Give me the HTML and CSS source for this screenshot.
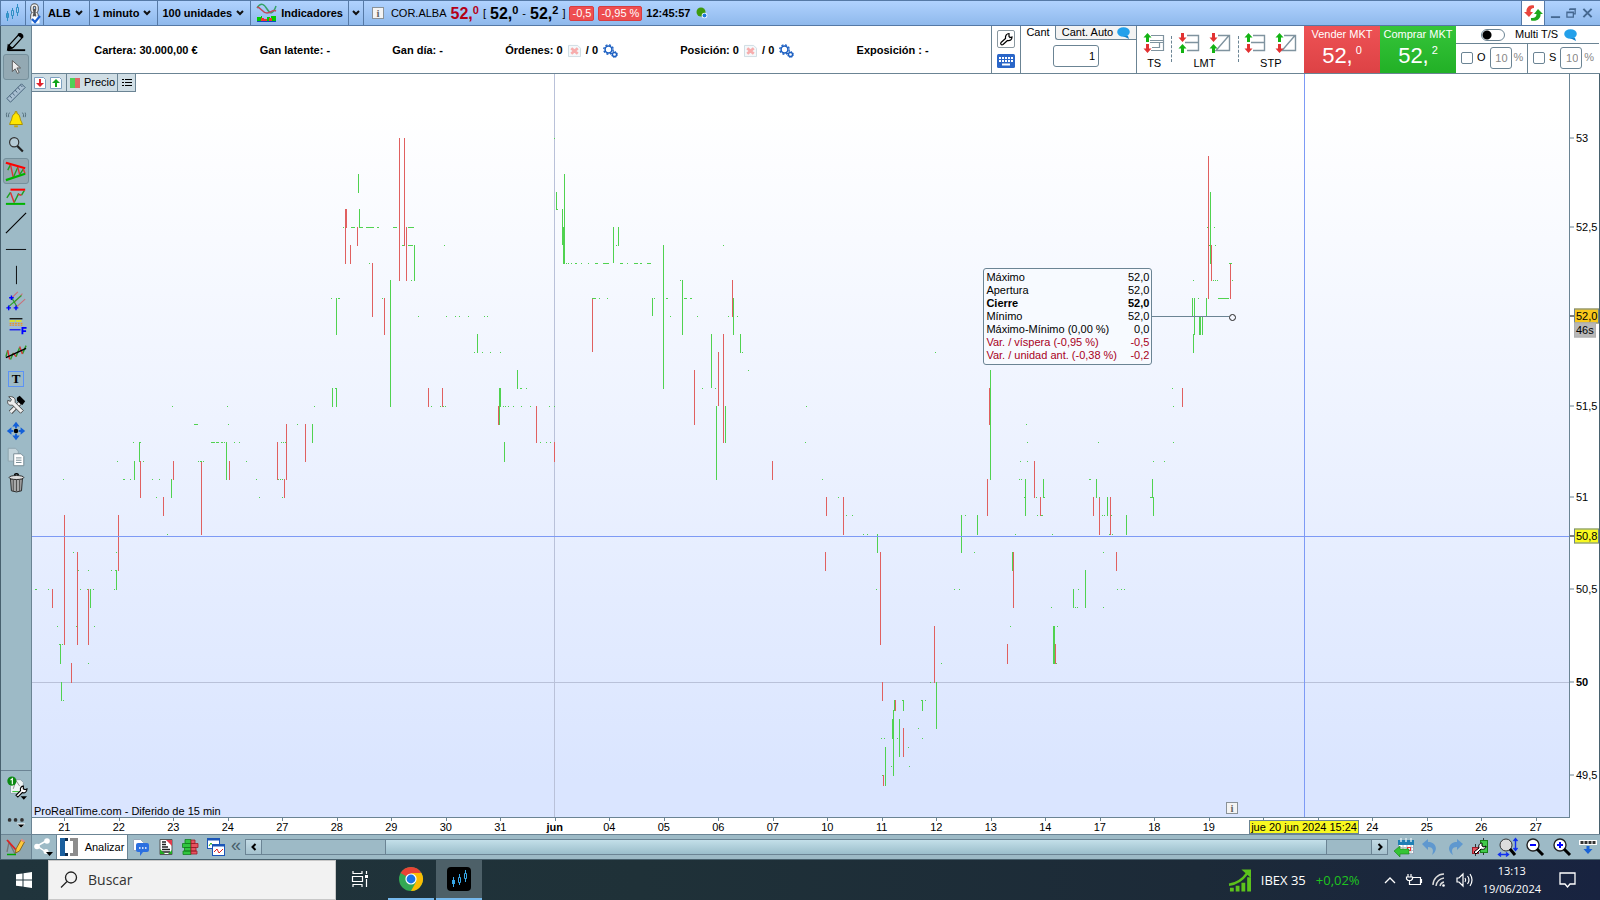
FILE: index.html
```html
<!DOCTYPE html>
<html lang="es">
<head>
<meta charset="utf-8">
<title>ALB - 1 minuto</title>
<link rel="stylesheet" href="styles.css">
</head>
<body>
<header class="titlebar">
  <span class="cell cell-logo"><svg width="16" height="18" viewBox="0 0 16 18"><g fill="none" stroke="#2f8fc4"><path d="M2.500 7v2M2.500 14v3M7.500 4v2M7.500 12v3M12.500 0v3M12.500 9v3"/><path fill="#3d9ccf" d="M1.500 9.500h2v4h-2z"/><path d="M6.500 6.500h2v5h-2zM11.500 3.500h2v5h-2z"/></g></svg></span>
  <button class="cell cell-link" aria-label="Vincular"><svg width="14" height="21" viewBox="0 0 14 21"><g fill="none" stroke="#555" stroke-width="3.600"><rect x="4" y="2" width="5" height="7" rx="2.500"/><rect x="4" y="10" width="5" height="7" rx="2.500"/></g><g fill="none" stroke="#eee" stroke-width="1.600"><rect x="4" y="2" width="5" height="7" rx="2.500"/><rect x="4" y="10" width="5" height="7" rx="2.500"/></g><path d="M6.500 6v7" stroke="#555" stroke-width="2.500"/><path d="M3.500 13.500h8v7h-8z" fill="#fff"/><path d="M4 16l3 3 5-6" fill="none" stroke="#1a5fd0" stroke-width="2.200"/></svg></button>
  <button class="cell">ALB<svg class="chev" viewBox="0 0 8 6"><path d="M1 1l3 3 3-3"/></svg></button>
  <button class="cell">1 minuto<svg class="chev" viewBox="0 0 8 6"><path d="M1 1l3 3 3-3"/></svg></button>
  <button class="cell">100 unidades<svg class="chev" viewBox="0 0 8 6"><path d="M1 1l3 3 3-3"/></svg></button>
  <button class="cell cell-ind"><svg width="20" height="20" viewBox="0 0 20 20"><path d="M0 5C4-1 7 1 10 6s6 6 9-3" fill="none" stroke="#35a368" stroke-width="1.500"/><path d="M0 4c4 0 5 6 10 6s5-4 9-2" fill="none" stroke="#c0485a" stroke-width="1.500"/><path d="M0 14h4v-1h1v5H0zM10 14h3v4h-3zM14 13h5v5h-5z" fill="#0c0"/><path d="M4 15h3v3H4zM7 16h3v2H7zM12 15h3v3h-3z" fill="#e33"/><path d="M0 18.500h19" stroke="#1246c8"/></svg>Indicadores</button>
  <button class="cell cell-more" aria-label="Más indicadores"><svg class="chev" viewBox="0 0 8 6"><path d="M1 1l3 3 3-3"/></svg></button>
  <div class="quote">
    <span class="info">i</span>
    <span class="name">COR.ALBA</span>
    <span class="price last">52,<sup>0</sup></span>
    <span>[</span><span class="price">52,<sup>0</sup></span><span>-</span><span class="price">52,<sup>2</sup></span><span>]</span>
    <span class="tag">-0,5</span><span class="tag">-0,95 %</span>
    <b class="clock">12:45:57</b>
    <svg width="12" height="12" viewBox="0 0 12 12"><circle cx="5" cy="5" r="4.500" fill="#3f9a0c"/><circle cx="8.500" cy="8.500" r="2.800" fill="#fff"/><circle cx="8.500" cy="8.500" r="2" fill="#1a78d8"/></svg>
  </div>
  <button class="cell cell-sync" aria-label="Sincronizar"><svg width="19" height="18" viewBox="0 0 19 18"><path d="M10 1.500C5 0 2 4 2.500 8H0l5 5 4-5H6.500c0-3 1-4 3.500-4z" fill="#e8443c"/><path d="M7 16.500c6 1.500 10-2 9.500-6.500H19l-5-5-4 5h2.500c0 3-2 4.500-5.500 4z" fill="#1fa81f"/></svg></button>
  <button class="win" aria-label="Minimizar"><svg width="11" height="12" viewBox="0 0 12 12"><path d="M1 10.500h10" stroke="#456891" stroke-width="2"/></svg></button>
  <button class="win" aria-label="Restaurar"><svg width="11" height="12" viewBox="0 0 12 12"><path d="M4 3V2h6v5H8M4 1.500h7M1 5h7v5.500H1zM1 5.500h7" fill="none" stroke="#456891" stroke-width="1.400"/></svg></button>
  <button class="win" aria-label="Cerrar"><svg width="11" height="12" viewBox="0 0 12 12"><path d="M1.500 1.500l9 9M10.500 1.500l-9 9" stroke="#456891" stroke-width="2.200"/></svg></button>
</header>

<div class="workspace">
  <nav class="tools" aria-label="Dibujo">
    <button aria-label="Dibujar"><svg viewBox="0 0 24 24"><path d="M3 22h19" stroke="#000" stroke-width="2"/><path d="M5 16L15 5l4 3L9 19l-5 1z" fill="#9dbac6" stroke="#000" stroke-width="1.400"/><path d="M14 4c2-2 7 0 6 4l-2 1-4-3zM3 15l6 5-7 3z"/></svg></button>
    <button class="on" aria-label="Puntero"><svg viewBox="0 0 24 24"><path d="M8 5v12l3-3 2.500 5 2-1-2.500-5h4z" fill="#eee" stroke="#555"/></svg></button>
    <button aria-label="Regla"><svg viewBox="0 0 24 24"><path d="M2 18L18 2l4 4L6 22z" fill="#a9c0d2" stroke="#3d5a72"/><path d="M5 15l2.500 2.500M8 12l2.500 2.500M11 9l2.500 2.500M14 6l2.500 2.500M17 3.500l2 2" stroke="#3d5a72"/></svg></button>
    <button aria-label="Alerta"><svg viewBox="0 0 24 24"><path d="M11 4h2v2c4 1 3 7 5 9l1 3H5l1-3c2-2 1-8 5-9z" fill="#ffe600" stroke="#a58b00"/><path d="M10 19h4v2h-4z" fill="#c8a800"/><path d="M5 5q-2 2-1 5M2 5q-1 2 0 5M19 5q2 2 1 5M22 5q1 2 0 5" fill="none" stroke="#4f6a77"/></svg></button>
    <button aria-label="Lupa"><svg viewBox="0 0 24 24"><circle cx="10" cy="9" r="5" fill="#b5cbd6" stroke="#333" stroke-width="1.300"/><path d="M13.500 13l6 6" stroke="#222" stroke-width="2.400"/></svg></button>
    <button class="on" aria-label="Figuras"><svg viewBox="0 0 24 24"><path d="M3 11L6 5M9 19l5-11M16 16l4-6" stroke="#1fa01f" stroke-width="1.500"/><path d="M6 5l3 14M14 8l2 8M20 10l2 5" fill="none" stroke="#d33" stroke-width="1.500"/><path d="M1 3l21 6" stroke="#f00" stroke-width="2.500"/><path d="M1 22l21-7" stroke="#00b400" stroke-width="2.500"/></svg></button>
    <button aria-label="Soportes"><svg viewBox="0 0 24 24"><path d="M2 13l4-6M10 18l5-10M18 10l3-5" fill="none" stroke="#1fa01f" stroke-width="1.600"/><path d="M6 7l4 11M14 9l4 1" stroke="#d33" stroke-width="1.600"/><path d="M6 4h16" stroke="#f00" stroke-width="2.200"/><path d="M1 19.500h21" stroke="#00b400" stroke-width="2.200"/></svg></button>
    <button aria-label="Línea"><svg viewBox="0 0 24 24"><path d="M1 23L23 1" stroke="#000" stroke-width="1.200"/></svg></button>
    <button aria-label="Horizontal"><svg viewBox="0 0 24 24"><path d="M1 12.500h22" stroke="#000"/></svg></button>
    <button aria-label="Vertical"><svg viewBox="0 0 24 24"><path d="M12.500 2v20" stroke="#000"/></svg></button>
    <button aria-label="Horquilla"><svg viewBox="0 0 24 24"><path d="M7 9L14 2M12 19l10-9M10 14l9-10" stroke="#c9707a" stroke-width="1.200"/><path d="M3 19L18 6M7 8l6 10" stroke="#2ca02c" stroke-width="1.300"/><path d="M7 6v5M4.500 8.500h5M4 17v5M1.500 19.500h5M12 17v5M9.500 19.500h5" stroke="#00f" stroke-width="1.500"/></svg></button>
    <button aria-label="Fibonacci"><svg viewBox="0 0 24 24"><path d="M5 3h14" stroke="#000" stroke-width="1.300"/><path d="M5 5.500h14" stroke="#ee0" stroke-width="1.500" stroke-dasharray="6 1"/><path d="M5 8h14M5 10h14" stroke="#f80" stroke-dasharray="2 1"/><path d="M5 12h11" stroke="#9bb8ff"/><path d="M5 15h12" stroke="#22e" stroke-width="1.500"/><path d="M19 20v-7h4.500M19 16.500h4" fill="none" stroke="#00f" stroke-width="2"/></svg></button>
    <button aria-label="Regresión"><svg viewBox="0 0 24 24"><path d="M1 16l2-7M6 19l3-7M12 16l4-10M19 13l4-9" fill="none" stroke="#2a9a2a" stroke-width="1.600"/><path d="M3 9l2 10M9 12l3 4M16 5l3 8" stroke="#d33" stroke-width="1.500"/><path d="M1 17l22-10" stroke="#000" stroke-width="1.500"/></svg></button>
    <button class="txt" aria-label="Texto"><span>T</span></button>
    <button aria-label="Herramientas"><svg viewBox="0 0 24 24"><path d="M17 9L6 20" stroke="#444" stroke-width="5"/><path d="M17 9L6 20" stroke="#eee" stroke-width="3"/><path d="M13 4l3-2 6 6-3 4-3-2-3-3z"/><path d="M4 3l3 3-1 2-3-1c-1 4 2 6 5 5l9 9 3-3-9-9c1-4-2-7-7-6z" fill="#eee" stroke="#444"/></svg></button>
    <button aria-label="Mover"><svg viewBox="0 0 24 24"><circle cx="12" cy="12" r="2.500"/><path d="M12 2l4 5h-3v2h-2V7H8zM12 22l4-5h-3v-2h-2v2H8zM2 12l5-4v3h2v2H7v3zM22 12l-5-4v3h-2v2h2v3z" fill="#1460d8"/></svg></button>
    <button aria-label="Copiar"><svg viewBox="0 0 24 24"><path d="M3.500 2.500h8l3 3v11h-11z" fill="#c3d4db" stroke="#8ca3ad"/><path d="M9.500 8.500h8l3 3v10h-11z" fill="#fff" stroke="#71858f"/><path d="M12 13h6M12 15.500h6M12 18h6" stroke="#71858f"/></svg></button>
    <button aria-label="Eliminar"><svg viewBox="0 0 24 24"><path d="M6 7.500h13l-1 13q-5.500 2.500-11 0z" fill="#aaa" stroke="#222"/><path d="M9 8v13M12.500 8v13M16 8v13" stroke="#444"/><ellipse cx="12.500" cy="6" rx="8" ry="2.200" fill="#ddd" stroke="#222"/><path d="M10 3q2.500-2 5 0" fill="none" stroke="#000" stroke-width="1.500"/></svg></button>
    <div class="tools-end">
      <button aria-label="Configurar"><svg viewBox="0 0 24 28"><path d="M6 6h11l3 3v12H6z" fill="#eef3f4" stroke="#8ca3ad"/><path d="M9 16l3-9 4 6" fill="none" stroke="#888"/><path d="M8 19h7" stroke="#2b2"/><path d="M12 23l5-5c-1-3 1-5 3-5v3l2 1 2-1c0 4-3 5-5 4l-5 5z" fill="#fff" stroke="#000" stroke-width="1.200"/><circle cx="7.500" cy="7.500" r="5" fill="#0b8a12"/><path d="M6 6.500L8 5v6" fill="none" stroke="#fff" stroke-width="1.300"/><path d="M17 24h7l-3.500 4z"/></svg></button>
      <button aria-label="Más"><svg viewBox="0 0 24 28"><circle cx="5" cy="15" r="2" fill="#333"/><circle cx="11.500" cy="15" r="2" fill="#333"/><circle cx="18.500" cy="15" r="2" fill="#333"/><path d="M13 19h9l-4.500 5z" fill="#fff"/><path d="M14 20h7l-3.500 3.500z"/></svg></button>
    </div>
  </nav>

  <main class="main">
    <section class="account">
      <div class="stats">
        <span>Cartera: 30.000,00 €</span>
        <span>Gan latente: -</span>
        <span>Gan día: -</span>
        <span class="st">Órdenes: 0 <svg class="del" viewBox="0 0 14 13"><path d="M.5.500h10l3 3v9H.5z" fill="#f4f8fa" stroke="#cddbe2"/><path d="M3.500 3.500l7 6M10.500 3.500l-7 6" stroke="#f7adad" stroke-width="3"/></svg> / 0 <svg class="gear" viewBox="0 0 15 14"><circle cx="5.500" cy="5.500" r="3.400" fill="none" stroke="#1b5fc2" stroke-width="1.500"/><circle cx="5.500" cy="5.500" r="4.700" fill="none" stroke="#1b5fc2" stroke-width="1.400" stroke-dasharray="2 1.690"/><circle cx="11.500" cy="10.500" r="2" fill="none" stroke="#1b5fc2" stroke-width="1.300"/><circle cx="11.500" cy="10.500" r="3" fill="none" stroke="#1b5fc2" stroke-dasharray="1.300 1.050"/></svg></span>
        <span class="st">Posición: 0 <svg class="del" viewBox="0 0 14 13"><path d="M.5.500h10l3 3v9H.5z" fill="#f4f8fa" stroke="#cddbe2"/><path d="M3.500 3.500l7 6M10.500 3.500l-7 6" stroke="#f7adad" stroke-width="3"/></svg> / 0 <svg class="gear" viewBox="0 0 15 14"><circle cx="5.500" cy="5.500" r="3.400" fill="none" stroke="#1b5fc2" stroke-width="1.500"/><circle cx="5.500" cy="5.500" r="4.700" fill="none" stroke="#1b5fc2" stroke-width="1.400" stroke-dasharray="2 1.690"/><circle cx="11.500" cy="10.500" r="2" fill="none" stroke="#1b5fc2" stroke-width="1.300"/><circle cx="11.500" cy="10.500" r="3" fill="none" stroke="#1b5fc2" stroke-dasharray="1.300 1.050"/></svg></span>
        <span>Exposición : -</span>
      </div>
      <div class="quick">
        <button class="wrench" aria-label="Ajustes"><svg width="14" height="14" viewBox="0 0 14 14"><path d="M2 10.500L6.500 6.500C6 3.500 8 1.500 10 1.500v3L11 5.500l2-.5c0 3-2 4-4.500 3.500L4 12.500c-1.500 1-3-.5-2-2z" fill="#fff" stroke="#000" stroke-width="1.200"/></svg></button>
        <button class="kbd" aria-label="Teclado"><svg width="18" height="14" viewBox="0 0 18 14"><rect width="18" height="14" rx="1.500" fill="#2a66c8"/><path d="M2 4h14M2 7h14" stroke="#fff" stroke-width="2" stroke-dasharray="2 1"/><path d="M5 10.500h8" stroke="#fff" stroke-width="2"/></svg></button>
      </div>
      <div class="qty">
        <div class="tabs"><button class="tab sel">Cant</button><button class="tab">Cant. Auto <svg class="bubble" viewBox="0 0 13 12"><ellipse cx="6.500" cy="5" rx="6.300" ry="4.800" fill="#23a0ea"/><path d="M6 9h5l1 3z" fill="#1583cc"/></svg></button></div>
        <input type="text" value="1" aria-label="Cantidad">
      </div>
      <div class="orders">
        <div class="grp">
          <div class="ic"><svg viewBox="0 0 20 20"><path d="M7 2.500h12.500v15H7" fill="none" stroke="#7f939f" stroke-width="1.200"/><path d="M6 7.500h13M6 9.500h13M15.500 10v4.500H8" fill="none" stroke="#7f939f" stroke-width="1.200"/><path d="M3.500 0l4 4.500H5V9H2V4.500H-.5z" fill="#13b313"/><path d="M3.500 20l4-4.500H5V11H2v4.500H-.5z" fill="#e23232"/></svg></div>TS</div>
        <div class="grp">
          <div class="ic"><svg viewBox="0 0 20 20"><path d="M8 2.500h11.500v15H8M6 9.500h13" fill="none" stroke="#7f939f" stroke-width="1.400"/><path d="M3.500 9l4-4.500H5V0H2v4.500H-.5z" fill="#e23232"/><path d="M3.500 11l4 4.500H5V20H2v-4.500H-.5z" fill="#13b313"/></svg><svg viewBox="0 0 20 20"><path d="M8 2.500h11.500v15H6L19 2.500" fill="none" stroke="#7f939f" stroke-width="1.400"/><path d="M3.500 9l4-4.500H5V0H2v4.500H-.5z" fill="#e23232"/><path d="M3.500 11l4 4.500H5V20H2v-4.500H-.5z" fill="#13b313"/></svg></div>LMT</div>
        <div class="grp">
          <div class="ic"><svg viewBox="0 0 20 20"><path d="M8 2.500h11.500v15H8M6 9.500h13" fill="none" stroke="#7f939f" stroke-width="1.400"/><path d="M3.500 0l4 4.500H5V9H2V4.500H-.5z" fill="#13b313"/><path d="M3.500 20l4-4.500H5V11H2v4.500H-.5z" fill="#e23232"/></svg><svg viewBox="0 0 20 20"><path d="M8 2.500h11.500v15H6L19 2.500" fill="none" stroke="#7f939f" stroke-width="1.400"/><path d="M3.500 0l4 4.500H5V9H2V4.500H-.5z" fill="#13b313"/><path d="M3.500 20l4-4.500H5V11H2v4.500H-.5z" fill="#e23232"/></svg></div>STP</div>
      </div>
      <button class="mkt sell">Vender MKT<span class="big">52,<small>0</small></span></button>
      <button class="mkt buy">Comprar MKT<span class="big">52,<small>2</small></span></button>
      <div class="multi">
        <label class="multi-top"><input type="checkbox" class="switch">Multi T/S <svg class="bubble" viewBox="0 0 13 12"><ellipse cx="6.500" cy="5" rx="6.300" ry="4.800" fill="#23a0ea"/><path d="M6 9h5l1 3z" fill="#1583cc"/></svg></label>
        <div class="pcts">
          <div class="pct"><label><input type="checkbox">O</label><input type="text" value="10" aria-label="Objetivo"><span>%</span></div>
          <div class="pct"><label><input type="checkbox">S</label><input type="text" value="10" aria-label="Stop"><span>%</span></div>
        </div>
      </div>
    </section>

    <section class="chart">
      <div class="plot">
        <svg class="bars" viewBox="32 74 1537 743" preserveAspectRatio="none" shape-rendering="crispEdges" fill="none">
          <path stroke="#b9c1d9" d="M554.500 74V817M32 682.500H1569"/>
          <g transform="translate(.5 0)">
            <path stroke="#50d250" d="M60 644v20M61 682v19M90 589v19M116 570v20M134 461v19M139 442v20M171 479v19M226 442v38M312 424v19M332 388v19M336 388v19M336 298v37M358 174v19M359 209v19M390 280v127M414 245v36M477 334v19M499 388v37M500 388v19M504 442v20M517 370v19M564 174v90M556 192v18M562 209v36M563 227v37M613 227v36M618 227v19M652 298v18M663 245v144M682 280v55M711 334v54M716 406v74M725 406v37M733 298v37M740 334v19M877 534v19M894 700v11M903 700v11M922 700v11M893 710v66M892 719v20M899 719v38M885 747v39M936 682v47M961 515v38M977 515v20M990 370v110M1012 552v19M1025 479v37M1043 479v19M1053 626v38M1054 626v38M1073 589v19M1085 570v38M1096 479v19M1107 497v19M1126 515v20M1152 479v19M1153 497v19M1210 192v72M1192 298v18M1194 298v37M1206 298v18M1193 334v19M1199 316v19M1200 316v19M1202 316v19"/>
            <path stroke="#e06060" d="M52 589v19M64 515v130M71 663v20M77 552v93M88 589v56M118 515v56M140 461v37M163 497v19M173 461v19M201 461v74M229 461v19M277 442v38M286 424v56M284 479v19M305 424v38M345 209v55M346 209v19M350 245v19M357 227v19M372 263v54M384 298v37M399 138v143M404 138v108M406 227v54M428 388v19M442 388v19M498 406v19M536 406v37M554 442v20M592 298v54M694 370v55M718 352v54M723 334v109M732 280v37M772 461v19M826 497v19M843 497v38M825 552v19M880 552v93M882 682v19M895 700v11M903 728v29M883 775v11M934 626v57M987 479v37M989 388v37M1013 552v56M1007 644v20M1034 461v37M1040 497v19M1055 644v20M1093 497v19M1099 497v38M1110 497v38M1116 552v19M1182 388v19M1208 156v143M1211 245v36M1230 263v36"/>
          </g>
          <path stroke="#50d250" transform="translate(0 .5)" d="M35 589h2M48 589h1M57 626h1M59 644h2M62 644h1M63 700h1M63 479h1M73 552h1M78 570h1M76 626h1M80 589h1M88 570h1M87 589h1M93 589h1M94 626h1M88 663h1M111 570h1M115 570h2M114 589h1M116 552h1M117 461h1M123 479h2M130 479h1M133 442h1M140 442h1M143 461h1M152 479h1M159 479h1M156 497h1M172 406h1M167 534h1M194 424h4M198 461h1M200 461h2M203 461h1M211 442h4M216 442h3M221 442h2M224 442h1M227 406h1M228 424h1M234 442h1M239 442h1M246 461h1M256 479h1M259 497h1M278 479h1M280 479h1M282 479h1M281 442h1M283 442h1M285 442h1M282 497h1M297 424h1M314 406h1M331 298h1M338 298h2M335 388h1M343 227h1M351 227h4M360 227h3M366 227h8M377 227h2M393 227h4M408 227h6M369 263h1M382 298h1M402 245h2M408 245h5M411 280h1M418 316h1M431 406h1M440 406h1M443 406h1M445 406h1M444 245h1M446 316h1M455 316h1M459 316h1M468 316h1M484 316h1M487 316h1M474 352h1M482 352h1M490 352h1M500 352h1M520 388h2M526 388h1M503 406h1M505 406h1M508 406h1M513 406h1M521 406h1M530 406h1M549 406h1M554 406h1M540 442h1M546 442h1M550 442h1M554 138h1M557 209h1M566 263h1M568 263h1M571 263h1M575 263h2M581 263h1M588 263h1M595 263h3M603 263h6M616 245h1M620 263h3M627 263h1M634 263h4M640 263h2M647 263h4M592 298h4M599 298h1M607 298h1M654 298h1M666 298h2M670 316h1M680 280h1M684 298h3M690 298h2M697 316h1M723 245h1M728 316h1M737 316h1M742 352h1M748 370h1M715 388h1M702 388h1M806 406h1M805 442h1M822 479h1M838 497h1M846 515h1M852 515h1M863 534h1M867 534h1M876 589h1M902 700h1M921 700h1M925 700h1M881 738h1M884 738h1M897 738h1M922 738h1M918 728h1M908 747h1M891 766h1M909 766h1M882 775h1M930 682h1M941 663h1M935 352h1M954 589h1M959 589h1M965 515h1M974 552h1M1015 534h1M1010 626h1M1019 479h1M1021 479h1M1020 461h1M1027 461h1M1026 424h1M1027 442h1M1024 497h1M1036 497h1M1037 515h1M1041 515h2M1044 497h1M1052 534h1M1051 607h1M1056 663h1M1057 626h1M1075 607h1M1077 607h1M1078 589h1M1089 479h2M1098 442h1M1099 497h1M1102 515h1M1104 515h1M1111 515h1M1109 534h1M1112 534h1M1103 552h1M1103 607h1M1117 589h1M1121 589h1M1124 589h1M1150 497h3M1153 461h1M1164 461h1M1172 388h1M1173 406h1M1173 442h1M1207 227h1M1209 245h1M1214 227h1M1215 245h1M1213 280h1M1215 280h1M1217 280h1M1193 280h1M1198 298h1M1218 298h11M1229 263h3M1232 280h1"/>
          <path stroke="#7d9af5" d="M1304.500 74V817M32 536.500H1569"/>
          <path stroke="#6b8494" d="M1151 316.500H1229"/>
        </svg>
        <i class="dot"></i>
        <div class="legend">
          <button class="pg" aria-label="Bajar"><svg viewBox="0 0 14 14"><path d="M1.500 1.500h9l2 2v9h-11z" fill="#fff" stroke="#7ea0c0"/><path d="M6 3h2v4h3l-4 4-4-4h3z" fill="#e0242f"/></svg></button>
          <button class="pg" aria-label="Subir"><svg viewBox="0 0 14 14"><path d="M1.500 1.500h9l2 2v9h-11z" fill="#fff" stroke="#7ea0c0"/><path d="M6 11h2V7h3L7 3 3 7h3z" fill="#0fa51c"/></svg></button>
          <button class="precio"><i class="swatch"></i>Precio</button>
          <button class="lst" aria-label="Lista"><svg width="10" height="9" viewBox="0 0 10 9"><path d="M3 1.500h7M3 4.500h7M3 7.500h7M0 1.500h2M0 4.500h2M0 7.500h2" stroke="#000" stroke-width="1.200"/></svg></button>
        </div>
        <table class="tip">
          <tr><td>Máximo</td><td>52,0</td></tr>
          <tr><td>Apertura</td><td>52,0</td></tr>
          <tr class="b"><td>Cierre</td><td>52,0</td></tr>
          <tr><td>Mínimo</td><td>52,0</td></tr>
          <tr><td>Máximo-Mínimo (0,00 %)</td><td>0,0</td></tr>
          <tr class="neg"><td>Var. / víspera (-0,95 %)</td><td>-0,5</td></tr>
          <tr class="neg"><td>Var. / unidad ant. (-0,38 %)</td><td>-0,2</td></tr>
        </table>
        <span class="info news">i</span>
        <span class="credit">ProRealTime.com - Diferido de 15 min</span>
      </div>
      <div class="yaxis">
        <span style="top:8.600%">53</span><span style="top:20.500%">52,5</span><span class="cur" style="top:32.500%">52,0</span><span class="left" style="top:34.400%">46s</span><span style="top:44.600%">51,5</span><span style="top:56.800%">51</span><span class="hair" style="top:62.100%">50,8</span><span style="top:69.200%">50,5</span><span class="bold" style="top:81.700%">50</span><span style="top:94.200%">49,5</span>
      </div>
      <div class="xaxis">
        <span>21</span><span>22</span><span>23</span><span>24</span><span>27</span><span>28</span><span>29</span><span>30</span><span>31</span><span class="bold">jun</span><span>04</span><span>05</span><span>06</span><span>07</span><span>10</span><span>11</span><span>12</span><span>13</span><span>14</span><span>17</span><span>18</span><span>19</span><span></span><span></span><span>24</span><span>25</span><span>26</span><span>27</span>
        <b class="when">jue 20 jun 2024 15:24</b>
      </div>
    </section>
  </main>
</div>

<footer class="bottombar">
  <button class="bb dark" aria-label="Dibujos"><svg width="20" height="18" viewBox="0 0 20 18"><path d="M1 14l2-10 6 12 4-9" fill="none" stroke="#777" stroke-width="1.300"/><path d="M1 2l10 11" stroke="#e02020" stroke-width="1.800"/><path d="M1 16.500h9" stroke="#00a800" stroke-width="1.500"/><path d="M10 11l5-9 3.500 2-5 9-4 2z" fill="#ffc93c" stroke="#8a6a20"/><path d="M15 1.500l3.500 2" stroke="#e58a8a" stroke-width="2"/></svg></button>
  <button class="bb share" aria-label="Compartir"><svg width="20" height="18" viewBox="0 0 20 18"><path d="M12 3L3 8l9 6" fill="none" stroke="#fff" stroke-width="1.500"/><g fill="#fff"><circle cx="13" cy="3" r="2.800"/><circle cx="3" cy="8.500" r="2.800"/><circle cx="12" cy="13.500" r="2.500"/></g><path d="M12 14h7l-3.500 4z"/></svg></button>
  <button class="bb analyze"><svg width="18" height="18" viewBox="0 0 18 18"><path d="M0 0h8v3H5v12h3v3H0z" fill="#1a5f9e"/><path d="M5 0h3v3H5zM5 15h3v3H5z" fill="#0f2c4c"/><path d="M18 0h-8v3h3v12h-3v3h8z" fill="#8d8d8d"/></svg>Analizar</button>
  <button class="bb ico" aria-label="Chat"><svg width="16" height="17" viewBox="0 0 16 17"><path d="M.5.500h7l3 3v8H.5z" fill="#fff" stroke="#9ab"/><path d="M5 4h9q2 0 2 2v5q0 2-2 2h-4l-3 4v-4H5q-2 0-2-2V6q0-2 2-2z" fill="#2b6fe0"/><path d="M6 9h8" stroke="#fff" stroke-width="1.500" stroke-dasharray="1.500 1.500"/></svg></button>
  <button class="bb ico" aria-label="Informe"><svg width="14" height="16" viewBox="0 0 14 16"><path d="M1 .5h12v15H1z" fill="#fff" stroke="#555"/><path d="M3 3h4M3 5.500h4M3 8h6M3 10.500h8M3 13h8" stroke="#222" stroke-width="1.300"/><path d="M7 1h6v6z" fill="#e23b4b"/><path d="M1 15v-5l5 5zM13 15v-4l-4 4z" fill="#2a2"/></svg></button>
  <button class="bb ico" aria-label="Libro"><svg width="17" height="16" viewBox="0 0 17 16"><g fill="#31c540" stroke="#13801f" stroke-width=".8"><path d="M3 .5h6v4H3zM.5 4.500H9v4H.5zM2.500 8.500H9v3.500H2.500zM1 12h8v3.500H1z"/></g><g fill="#e65360" stroke="#9a1c28" stroke-width=".8"><path d="M9 1h4v3.500H9zM9 4.500h7v4H9zM9 8.500h5V12H9zM9 12h6v3H9z"/></g></svg></button>
  <button class="bb ico" aria-label="Ventanas"><svg width="18" height="18" viewBox="0 0 18 18"><rect x=".5" y=".5" width="12" height="10" fill="#fff" stroke="#1b55b8"/><path d="M.5 1.500h12" stroke="#1b55b8" stroke-width="2"/><path d="M2 8l2-3 2 3" fill="none" stroke="#2a2"/><rect x="5.500" y="6.500" width="12" height="11" fill="#fff" stroke="#1b55b8"/><path d="M5.500 7.500h12" stroke="#1b55b8" stroke-width="2"/><path d="M7 14l3-3 2 4 4-4" fill="none" stroke="#d22"/></svg></button>
  <span class="fold">«</span>
  <div class="scroll"><button aria-label="Izquierda"><svg width="6" height="8" viewBox="0 0 6 8"><path d="M4.500 1l-3 3 3 3"/></svg></button><div class="track"><i class="thumb"></i></div><button aria-label="Derecha"><svg width="6" height="8" viewBox="0 0 6 8"><path d="M1.500 1l3 3-3 3"/></svg></button></div>
  <div class="right">
    <button aria-label="Fecha"><svg width="20" height="19" viewBox="0 0 20 19"><rect x="4.500" y="2.500" width="15" height="13" fill="#fff" stroke="#9ab"/><path d="M4 2h16v5H4z" fill="#1f7fb4"/><path d="M7 0v4M12 0v4M17 0v4" stroke="#e6f2f8" stroke-width="1.300"/><path d="M6 9.500h13M6 12.500h13M9 7v9M13 7v9M17 7v9" stroke="#b8c4cc"/><rect x="13.500" y="9.500" width="3" height="3" fill="none" stroke="#e33"/><path d="M0 13l6-5v3h9v5H6v3z" fill="#35c435" stroke="#178017" stroke-width=".6"/></svg></button>
    <button aria-label="Deshacer"><svg width="16" height="16" viewBox="0 0 16 16"><path d="M0 5l6-5v3c8 0 11 8 4 13 2-5 1-8-4-8v3z" fill="#5f98cf"/></svg></button>
    <button aria-label="Rehacer"><svg width="16" height="16" viewBox="0 0 16 16"><path d="M16 5l-6-5v3C2 3-1 11 6 16 4 11 5 8 10 8v3z" fill="#5f98cf"/></svg></button>
    <button aria-label="Estilo"><svg width="18" height="18" viewBox="0 0 18 18"><path d="M12.500 0v17M4.500 6v12" stroke="#333"/><rect x="9.500" y="2.500" width="7" height="12" fill="#41c94a" stroke="#178017"/><rect x="1.500" y="9.500" width="6" height="6" fill="#e65360" stroke="#9a1c28"/><path d="M3 14l5-4c-1-3 1-5 3-5v3l2 1 2-1c0 3-3 4-5 3l-5 5z" fill="#fff" stroke="#000"/></svg></button>
    <button aria-label="Ajustar zoom"><svg width="20" height="19" viewBox="0 0 20 19"><circle cx="8" cy="7" r="6" fill="#ddd" stroke="#333"/><path d="M12 11l5 6" stroke="#000" stroke-width="3"/><path d="M17.500 1v12M15.500 3l2-2.500 2 2.500M15.500 10l2 2.500 2-2.500M1 16.500h9M3 14.500L.5 16.500 3 18.500M8 14.500l2.500 2-2.500 2" fill="none" stroke="#1030f0" stroke-width="1.400"/></svg></button>
    <button aria-label="Alejar"><svg width="18" height="18" viewBox="0 0 18 18"><circle cx="7" cy="7" r="6" fill="#fff" stroke="#222" stroke-width="1.400"/><path d="M11 11l6 6" stroke="#000" stroke-width="3"/><path d="M4 7h6" stroke="#00f" stroke-width="2"/></svg></button>
    <button aria-label="Acercar"><svg width="18" height="18" viewBox="0 0 18 18"><circle cx="7" cy="7" r="6" fill="#fff" stroke="#222" stroke-width="1.400"/><path d="M11 11l6 6" stroke="#000" stroke-width="3"/><path d="M4 7h6M7 4v6" stroke="#00f" stroke-width="2"/></svg></button>
    <button aria-label="Ocultar"><svg width="18" height="14" viewBox="0 0 18 14"><rect width="18" height="5" fill="#fff"/><path d="M1.500 2.500h16" stroke="#333" stroke-width="3" stroke-dasharray="3 1"/><path d="M7.500 6h3v3h3L9 14 4.500 9h3z" fill="#1a62d6"/></svg></button>
  </div>
</footer>

<footer class="taskbar">
  <button class="start" aria-label="Inicio"><svg width="16" height="16" viewBox="0 0 16 16"><path d="M0 2.300L6.500 1.400v6.100H0zM7.500 1.200L16 0v7.500H7.500zM0 8.500h6.500v6.100L0 13.700zM7.500 8.500H16V16l-8.500-1.200z" fill="#fff"/></svg></button>
  <label class="search"><svg width="18" height="18" viewBox="0 0 18 18"><circle cx="11" cy="6.500" r="5.500" fill="none" stroke="#222" stroke-width="1.300"/><path d="M7 10.500l-6 6" stroke="#222" stroke-width="1.300"/></svg><input type="text" placeholder="Buscar"></label>
  <button class="app" aria-label="Vista de tareas"><svg width="16" height="16" viewBox="0 0 16 16"><path d="M1 0v2.500h9V0M1 16v-2.500h9V16M.5 5.500h10v5H.5zM14.500 0v3M14.500 8v8" fill="none" stroke="#fff" stroke-width="1.200"/><path d="M13 4h3v3h-3z" fill="#fff"/></svg></button>
  <button class="app run" aria-label="Chrome"><svg width="24" height="24" viewBox="0 0 24 24"><circle cx="12" cy="12" r="12" fill="#34a853"/><path d="M12 12L1.600 6A12 12 0 0 1 22.400 6z" fill="#ea4335"/><path d="M12 6h10.400A12 12 0 0 1 12 24l5-9z" fill="#fbbc04"/><circle cx="12" cy="12" r="5.600" fill="#fff"/><circle cx="12" cy="12" r="4.400" fill="#1a73e8"/></svg></button>
  <button class="app run act" aria-label="ProRealTime"><svg width="24" height="24" viewBox="0 0 24 24"><rect width="24" height="24" rx="4"/><path d="M6.500 10v10M12.500 7v11M18.500 3v12" stroke="#38a8e8"/><path d="M5 13h3v4H5z" fill="#38a8e8"/><path d="M11.500 10.500h2v5h-2zM17.500 6.500h2v5h-2z" stroke="#38a8e8"/></svg></button>
  <div class="tray">
    <svg width="22" height="24" viewBox="0 0 23 24"><g fill="#5cc21c"><path d="M1 20h4v4H1zM7 18h4v6H7zM13 15h4v9h-4zM19 9h4v15h-4z"/></g><path d="M0 17C8 16 14 12 19 5" fill="none" stroke="#5cc21c" stroke-width="2.500"/><path d="M13 1h10v9z" fill="#5cc21c"/></svg>
    <span class="ibex">IBEX 35</span><span class="up">+0,02%</span>
    <svg width="12" height="8" viewBox="0 0 12 8"><path d="M1 7l5-5 5 5" fill="none" stroke="#fff" stroke-width="1.300"/></svg>
    <svg width="16" height="14" viewBox="0 0 16 14"><path d="M7 4.500h7.500v7H5M15.500 6v4M2 1v3M5 1v3M.5 4h6v2L5 7.500H2L.5 6zM3.500 7.500v4H5" fill="none" stroke="#fff" stroke-width="1.200"/></svg>
    <svg width="14" height="14" viewBox="0 0 14 14"><path d="M1 12A11 11 0 0 1 12 1M4 13a9 9 0 0 1 8-8M8 13a5 5 0 0 1 4-4" fill="none" stroke="#ddd" stroke-width="1.400"/><circle cx="11.500" cy="12.500" r="1.300" fill="#fff"/></svg>
    <svg width="17" height="14" viewBox="0 0 17 14"><path d="M1 5h2l4-4v12L3 9H1zM9 5q1.500 2 0 4M11.500 3q3 4 0 8M14 1q4 6 0 12" fill="none" stroke="#fff" stroke-width="1.200"/></svg>
    <span class="when2">13:13<br>19/06/2024</span>
    <svg class="note" width="17" height="16" viewBox="0 0 17 16"><path d="M1 1h15v11h-5l-2.500 3L6 12H1z" fill="none" stroke="#fff" stroke-width="1.300"/></svg>
  </div>
</footer>
</body>
</html>
```
FILE: styles.css
```css
* { box-sizing: border-box; }
body {
  margin: 0;
  height: 100vh;
  display: flex;
  flex-direction: column;
  overflow: hidden;
  font: 11px/13px "Liberation Sans", Arial, sans-serif;
  color: #000;
  background: #9dbac6;
}
button {
  border: 0;
  margin: 0;
  padding: 0;
  background: none;
  font: inherit;
  color: inherit;
  display: flex;
  align-items: center;
  justify-content: center;
}
svg { flex: none; overflow: visible; }
sup { line-height: 0; }

/* title bar */
.titlebar {
  flex: none;
  height: 26px;
  display: flex;
  align-items: stretch;
  border: 1px solid #5579a6;
  border-width: 1px 0 1px 1px;
  background: linear-gradient(#b0d2fe, #8fb9ec);
  padding-right: 5px;
}
.cell {
  border-right: 1px solid #5579a6;
  padding: 0 6px 0 4px;
  gap: 4px;
  font-weight: bold;
  display: flex;
  align-items: center;
}
.cell-logo { width: 25px; }
.cell-link { width: 18px; padding: 0; }
.cell-ind { padding: 0 5px 0 6px; }
.cell-more { width: 15px; padding: 0; }
.cell-sync { width: 24px; padding: 0; background: #fff; border-left: 1px solid #5579a6; margin-right: 2px; }
.chev { width: 8px; height: 6px; fill: none; stroke: #111; stroke-width: 2; }
.quote { flex: 1; display: flex; align-items: center; gap: 4px; padding-left: 8px; white-space: nowrap; }
.quote .name { margin-left: 3px; }
.info {
  width: 12px;
  height: 12px;
  border: 1px solid #8a9298;
  background: #f4f4f4;
  color: #666;
  font: bold 11px/10px "Liberation Serif", serif;
  text-align: center;
}
.price { font-size: 16px; font-weight: bold; }
.price sup { font-size: 11px; vertical-align: 5px; }
.last { color: #b40016; }
.tag { background: #ee4e50; border: 1px solid #d83c40; color: #fff; border-radius: 2px; padding: 0 2px; }
.clock { margin-right: 2px; }
.win { width: 16px; }

/* work area */
.workspace { flex: 1; display: flex; min-height: 0; }
.tools {
  width: 32px;
  flex: none;
  display: flex;
  flex-direction: column;
  align-items: center;
  padding-top: 2px;
  border-left: 1px solid #48616e;
  border-right: 1px solid #6b8494;
}
.tools > button { width: 26px; height: 26px; border-radius: 3px; border: 1px solid transparent; }
.tools svg { width: 22px; height: 22px; }
.tools .on { background: #93a9b3; border-color: #75909c; }
.txt span { width: 16px; height: 16px; border: 1px solid #5c93f5; font: bold 13px/14px "Liberation Serif", serif; }
.tools-end {
  margin-top: auto;
  align-self: stretch;
  height: 65px;
  border-top: 1px solid #6b8494;
  border-bottom: 1px solid #6b8494;
  display: flex;
  flex-direction: column;
  align-items: center;
}
.tools-end svg { height: 32px; }
.tools-end button { height: 32px; }
.main { flex: 1; min-width: 0; display: flex; flex-direction: column; }

/* account strip */
.account { flex: none; height: 48px; display: flex; background: #fff; border-bottom: 1px solid #6b8494; padding-right: 1px; }
.stats { flex: 1; display: flex; align-items: center; justify-content: space-evenly; font-weight: bold; padding-top: 2px; }
.st { display: flex; align-items: center; gap: 2px; white-space: pre; }
.del { width: 13px; height: 12px; }
.gear { width: 15px; height: 14px; }
.quick { width: 30px; border-left: 1px solid #6b8494; border-right: 1px solid #6b8494; display: flex; flex-direction: column; align-items: center; gap: 6px; padding-top: 4px; }
.wrench { width: 18px; height: 18px; border: 1px solid #8a98a0; border-radius: 2px; }
.qty { width: 116px; border-right: 1px solid #6b8494; display: flex; flex-direction: column; align-items: center; gap: 5px; padding-right: 5px; }
.tabs { display: flex; align-self: stretch; height: 14px; margin-right: -5px; }
.tab { flex: 1; gap: 4px; background: #f3f3f3; border: 1px solid #6b8494; border-width: 0 0 1px 1px; border-radius: 0 0 0 3px; white-space: nowrap; }
.tab.sel { flex: none; width: 34px; background: #fff; border-color: transparent; border-left: 0; }
.bubble { width: 13px; height: 12px; }
input[type=text] { font: inherit; border: 1px solid #6b8494; border-radius: 3px; text-align: right; background: #fff; }
.qty input { width: 46px; height: 22px; padding: 0 3px; }
.orders { width: 167px; display: flex; }
.grp { flex: 1 1 66px; display: flex; flex-direction: column; align-items: center; gap: 4px; padding-top: 7px; position: relative; }
.grp:first-child { flex-basis: 34px; }
.grp + .grp::before { content: ""; position: absolute; left: 0; top: 10px; height: 26px; border-left: 1px dashed #6b8494; }
.ic { display: flex; gap: 11px; }
.ic svg { width: 20px; height: 20px; }
.mkt { width: 76px; flex-direction: column; justify-content: flex-start; padding-top: 2px; color: #fff; gap: 3px; }
.sell { background: linear-gradient(#ee5255, #dd4245); }
.buy { background: linear-gradient(#35c53a, #22b026); }
.big { display: flex; gap: 3px; font-size: 22px; line-height: 24px; }
.big small { font-size: 11px; line-height: 13px; }
.multi { width: 143px; display: flex; flex-direction: column; }
.multi-top { height: 18px; display: flex; align-items: center; gap: 6px; border-bottom: 1px solid #6b8494; }
.switch { appearance: none; width: 24px; height: 12px; margin: 0 4px 0 25px; border: 1px solid #6b8494; border-radius: 6px; background: radial-gradient(circle at 5px 5px, #000 4px, #fff 5px); }
.pcts { flex: 1; display: flex; padding-bottom: 2px; }
.pct { flex: 1; display: flex; align-items: center; gap: 2px; padding-left: 5px; }
.pct + .pct { border-left: 1px solid #6b8494; margin-bottom: -2px; padding-bottom: 2px; }
.pct label { display: flex; align-items: center; gap: 4px; margin-right: 2px; }
.pct input[type=checkbox] { appearance: none; margin: 0; width: 12px; height: 12px; border: 1px solid #6b8494; border-radius: 2px; }
.pct input[type=text] { width: 22px; height: 22px; padding: 0 3px; color: #888; }
.pct > span { color: #888; }

/* chart */
.chart { flex: 1; min-height: 0; display: grid; grid-template: 1fr 16px / 1fr 31px; background: #fff; border-bottom: 1px solid #6b8494; }
.plot { position: relative; min-width: 0; min-height: 0; background: linear-gradient(#fff 5%, #dae5ff 95%); border-bottom: 1px solid #6b8494; }
.bars { display: block; position: absolute; width: 100%; height: 100%; }
.dot { position: absolute; left: 78.100%; top: 32.700%; width: 7px; height: 7px; margin: -3px 0 0 -3px; border: 1px solid #222; border-radius: 50%; background: #f4f7ff; }
.legend { position: absolute; left: 0; top: 0; display: flex; height: 18px; background: #d0dee5; border: 1px solid #6b8494; border-width: 0 1px 1px 0; }
.pg { width: 16px; }
.pg svg { width: 14px; height: 14px; }
.precio { gap: 4px; padding: 0 2px 0 3px; margin-left: 2px; border: 1px solid #6b8494; border-width: 0 1px; }
.swatch { width: 10px; height: 10px; background: linear-gradient(90deg, #4fd057 50%, #e06666 50%); }
.lst { width: 17px; }
.tip {
  position: absolute;
  left: 61.900%;
  top: 26.100%;
  width: 169px;
  border: 1px solid #6b8494;
  border-radius: 3px;
  background: #f7faff;
  border-spacing: 0;
  padding: 2px;
  white-space: nowrap;
}
.tip td { padding: 0; }
.tip td + td { text-align: right; }
.tip .b { font-weight: bold; }
.neg { color: #a8001c; }
.news { position: absolute; right: 331px; bottom: 3px; }
.credit { position: absolute; left: 2px; bottom: -1px; }
.yaxis { position: relative; border-left: 1px solid #6b8494; border-right: 1px solid #48616e; }
.yaxis span { position: absolute; left: 0; padding: 0 1px 0 6px; transform: translateY(-50%); }
.yaxis span::before { content: ""; position: absolute; left: 0; top: 6px; width: 4px; border-top: 1px solid #6b8494; }
.yaxis .cur, .yaxis .hair, .yaxis .left { left: 4px; padding: 0 1px; border: 1px solid #6b8494; background: #f8c81c; }
.yaxis .hair { background: #f8f820; }
.yaxis .left { background: #b8b8b8; border-color: #b0b0b0; }
.yaxis .left::before { display: none; }
.yaxis .cur::before, .yaxis .hair::before { left: -5px; border-color: #000; }
.bold { font-weight: bold; }
.xaxis { grid-column: 1 / 3; position: relative; display: flex; padding: 0 36px 0 5px; border-right: 1px solid #48616e; }
.xaxis span { flex: 1 1 0; text-align: center; padding-top: 3px; position: relative; }
.xaxis span::before { content: ""; position: absolute; left: 50%; top: 0; height: 3px; border-left: 1px solid #6b8494; }
.when { position: absolute; right: 240px; top: 2px; font-weight: normal; background: #f8f820; border: 1px solid #6b8494; padding: 0 1px; line-height: 12px; white-space: nowrap; }

/* bottom toolbar */
.bottombar { flex: none; height: 25px; display: flex; align-items: stretch; border-left: 1px solid #48616e; border-bottom: 1px solid #48616e; padding-right: 3px; }
.bb { border-right: 1px solid #6b8494; }
.dark { width: 31px; background: #8ea7b2; }
.share { width: 25px; }
.analyze { width: 71px; gap: 7px; background: #fff; }
.ico { width: 25px; border: 0; }
.fold { font: 18px/21px "Liberation Sans", sans-serif; color: #47606c; padding: 0 4px 0 3px; }
.scroll { flex: 1; display: flex; height: 16px; margin: 4px 0 0; border: 1px solid #6b8494; background: #9dbac6; }
.scroll button { width: 15px; background: linear-gradient(#c3dbe5, #a5c2ce); }
.scroll button svg { fill: none; stroke: #000; stroke-width: 2; }
.track { flex: 1; border: 1px solid #6b8494; border-width: 0 1px; }
.thumb { display: block; margin: 0 4% 0 11.100%; height: 100%; border: 1px solid #6b8494; border-width: 0 1px; background: linear-gradient(#c3dfe9, #9bbecb); }
.right { width: 209px; padding-left: 6px; display: flex; align-items: center; justify-content: space-between; }

/* system task bar */
.taskbar { flex: none; height: 40px; display: flex; align-items: stretch; background: linear-gradient(90deg, #20343c 0%, #1f3138 40%, #1c2a38 75%, #182340 100%); color: #fff; font: 14px/16px "Open Sans", "Noto Sans", sans-serif; }
.start { width: 48px; }
.search { width: 288px; display: flex; align-items: center; gap: 10px; padding-left: 11px; background: #f2f2f2; border: 1px solid #c8c8c8; }
.search input { flex: 1; min-width: 0; border: 0; background: none; text-align: left; font-size: 14px; padding: 0; outline: 0; }
.search input::placeholder { color: #333; opacity: 1; }
.app { width: 48px; border-bottom: 2px solid transparent; }
.app + .app { width: 46px; margin-left: 4px; border-bottom-color: #76b9ed; }
.app.act { background: #4d6068; width: 46px; margin-left: 2px; }
.tray { margin-left: auto; display: flex; align-items: center; gap: 10px; padding-right: 24px; }
.ibex, .up { font-size: 13px; }
.up { color: #1fc41f; margin-right: 14px; }
.when2 { font-size: 11px; line-height: 18px; text-align: center; }
.note { margin-left: 8px; }
```
